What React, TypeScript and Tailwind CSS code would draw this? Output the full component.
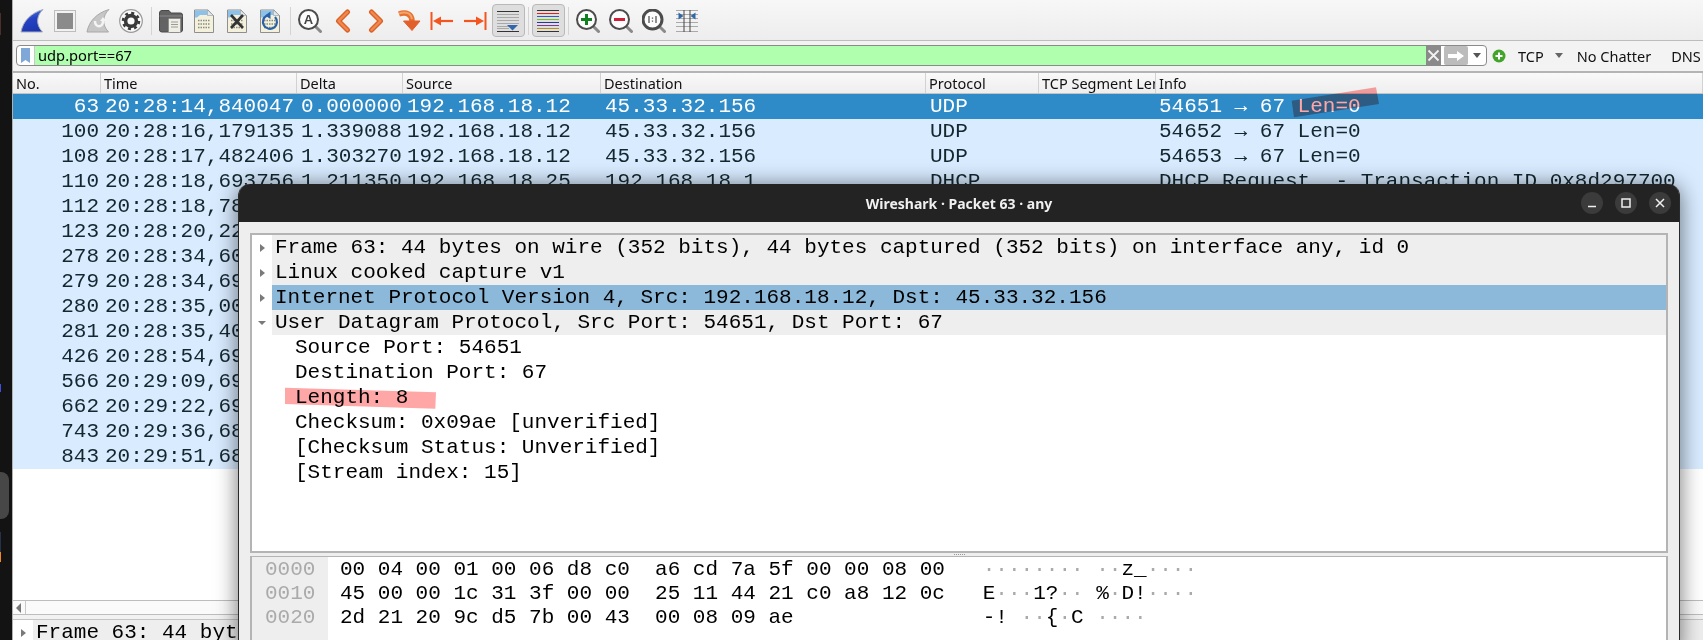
import React from "react";

const mono = "font-['Liberation_Mono',monospace] text-[21px] leading-[25px] whitespace-pre";
const ui = "font-['Noto_Sans',sans-serif]";

const Slot = ({ children, active }: { children: React.ReactNode; active?: boolean }) => (
  <div
    className={
      "w-[33px] h-[33px] shrink-0 flex items-center justify-center " +
      (active ? "bg-[#dedede] border border-[#b9b9b9] rounded-[4px]" : "")
    }
  >
    {children}
  </div>
);
const Sep = () => (
  <div className="w-[7px] h-[28px] shrink-0 flex justify-center">
    <div className="w-px h-full bg-[#d4d4d4]" />
  </div>
);
const Ic = ({ children }: { children: React.ReactNode }) => (
  <svg width="24" height="24" viewBox="0 0 24 24" fill="none">
    {children}
  </svg>
);

const finPath = "M1 23 C3 12 11 4 23 0.500 C17 6 15 15 22.500 23 Z";
const Fin = () => (
  <Ic>
    <defs>
      <linearGradient id="finFill" x1="0.200" y1="0" x2="0.500" y2="1">
        <stop offset="0" stopColor="#5a80e6" />
        <stop offset="0.450" stopColor="#2442c4" />
        <stop offset="1" stopColor="#1c36ae" />
      </linearGradient>
    </defs>
    <path d={finPath} fill="url(#finFill)" stroke="#aab0ba" strokeWidth="1" />
  </Ic>
);
const Stop = () => (
  <Ic>
    <rect x="1.500" y="1.500" width="21" height="21" fill="#f2f2f2" stroke="#bdbdbd" />
    <rect x="4" y="4" width="16" height="16" fill="#8b8b8b" />
  </Ic>
);
const Restart = () => (
  <Ic>
    <path d={finPath} fill="#c6c6c6" stroke="#a8a8a8" strokeWidth="1" />
    <path d="M9 12 C9 19 17 19 17 12" stroke="#f4f4f4" strokeWidth="2.500" />
    <path d="M14 12 L17 8 L20 12 Z" fill="#f4f4f4" />
  </Ic>
);
const Gear = () => (
  <Ic>
    <circle cx="12" cy="12" r="11.300" fill="#fafafa" stroke="#9a9a9a" strokeWidth="1.200" />
    <circle cx="12" cy="12" r="8" fill="none" stroke="#3a3a3a" strokeWidth="2.500" strokeDasharray="3 3.280" />
    <circle cx="12" cy="12" r="5.400" fill="none" stroke="#3a3a3a" strokeWidth="3.600" />
  </Ic>
);
const Folder = () => (
  <Ic>
    <path d="M0.500 4 Q0.500 1.500 3 1.500 L10 1.500 L12 4 L21.500 4 Q23.500 4 23.500 6 L23.500 21 Q23.500 23 21.500 23 L3 23 Q0.500 23 0.500 21 Z" fill="#636363" stroke="#4a4a4a" />
    <path d="M0.500 7 L23.500 7" stroke="#8a8a8a" />
    <rect x="9.500" y="9.500" width="12" height="14" rx="1" fill="#efeee4" stroke="#8d8d8d" />
    <path d="M12 13 H19 M12 15.500 H19 M12 18 H19" stroke="#9a9a9a" />
  </Ic>
);
const FileBase = () => (
  <>
    <path d="M2.500 1 L16 1 L21.500 6.500 L21.500 23.500 L2.500 23.500 Z" fill="#f3f0dc" stroke="#8f8f8f" />
    <path d="M3 1.500 L15.500 1.500 L15.500 6 L8 6 L5 8.500 L3 8.500 Z" fill="#8cc2ea" />
    <path d="M15.500 1 L15.500 6.500 L21.500 6.500 Z" fill="#dfe8ee" stroke="#9a9a9a" strokeWidth="0.600" />
    <path d="M6 11.500 H18 M6 15 H18 M6 18.500 H18" stroke="#8a8a80" strokeWidth="1.600" strokeDasharray="1.500 1" />
  </>
);
const FileIc = () => (
  <Ic>
    <FileBase />
  </Ic>
);
const FileX = () => (
  <Ic>
    <FileBase />
    <path d="M6 6 L18 19 M18 6 L6 19" stroke="#333" strokeWidth="2.600" />
  </Ic>
);
const FileR = () => (
  <Ic>
    <FileBase />
    <path d="M9 6.500 A7 7 0 1 0 17 8" stroke="#2a62a8" strokeWidth="2.200" />
    <path d="M12.500 2.500 L12.500 10 L7 6.500 Z" fill="#2a62a8" />
  </Ic>
);
const Lens = ({ children, w = 2 }: { children?: React.ReactNode; w?: number }) => (
  <Ic>
    <path d="M17 17 L22.500 22.500" stroke="#8a8a8a" strokeWidth="3" strokeLinecap="round" />
    <circle cx="10.500" cy="10.500" r="9.500" fill="#fdfdfd" stroke="#4c4c4c" strokeWidth={w} />
    {children}
  </Ic>
);
const ChevL = () => (
  <Ic>
    <path d="M16.500 3 L7.500 12 L16.500 21" stroke="#dd5f26" strokeWidth="5" strokeLinejoin="round" strokeLinecap="round" />
    <path d="M16.500 3 L7.500 12 L16.500 21" stroke="#ef8a4e" strokeWidth="2.400" strokeLinejoin="round" strokeLinecap="round" />
  </Ic>
);
const ChevR = () => (
  <Ic>
    <path d="M7.500 3 L16.500 12 L7.500 21" stroke="#dd5f26" strokeWidth="5" strokeLinejoin="round" strokeLinecap="round" />
    <path d="M7.500 3 L16.500 12 L7.500 21" stroke="#ef8a4e" strokeWidth="2.400" strokeLinejoin="round" strokeLinecap="round" />
  </Ic>
);
const Jump = () => (
  <Ic>
    <path d="M2 5 C9 2.500 15 5 15 12" stroke="#e8702e" strokeWidth="5.500" />
    <path d="M2 4.500 C9 2 14 4 15 10" stroke="#f2a36e" strokeWidth="2" />
    <path d="M6.500 12 L23 12 L15 21.500 Z" fill="#e2602a" stroke="#e2602a" strokeLinejoin="round" />
  </Ic>
);
const First = () => (
  <Ic>
    <path d="M1.500 3 V21" stroke="#f4551f" strokeWidth="2" />
    <path d="M8 12 H23" stroke="#f4551f" strokeWidth="2.200" />
    <path d="M3 12 L11 7.500 L11 16.500 Z" fill="#f4551f" />
  </Ic>
);
const Last = () => (
  <Ic>
    <path d="M22.500 3 V21" stroke="#f4551f" strokeWidth="2" />
    <path d="M1 12 H16" stroke="#f4551f" strokeWidth="2.200" />
    <path d="M21 12 L13 7.500 L13 16.500 Z" fill="#f4551f" />
  </Ic>
);
const Auto = () => (
  <Ic>
    <path d="M1 2.500 H23 M1 22.500 H23" stroke="#333" />
    <path d="M1 5.500 H23 M1 8.500 H23 M1 11.500 H23 M1 14.500 H23 M1 17.500 H15 M1 19.500 H13" stroke="#a8a8a8" />
    <path d="M11 16 L22 16 L16.500 21.500 Z" fill="#2f66ac" />
  </Ic>
);
const Colorize = () => (
  <Ic>
    <path d="M1 1.500 H23" stroke="#333" />
    <path d="M1 4.500 H23" stroke="#e02020" />
    <path d="M1 7.500 H23" stroke="#3858c0" />
    <path d="M1 10.500 H23" stroke="#70c020" />
    <path d="M1 13.500 H23" stroke="#283898" />
    <path d="M1 16.500 H23" stroke="#803890" />
    <path d="M1 19.500 H23" stroke="#b89020" />
    <path d="M1 22.500 H23" stroke="#333" />
  </Ic>
);
const ResizeC = () => (
  <Ic>
    <path d="M1 1.500 H23 M1 22.500 H23 M1 5.500 H23 M1 9.500 H23 M1 13.500 H23 M1 17.500 H23" stroke="#a9a9a9" />
    <path d="M9 1 V23 M15 1 V23" stroke="#444" />
    <path d="M3.500 3.500 L8.500 7 L3.500 10.500 Z M20.500 3.500 L15.500 7 L20.500 10.500 Z" fill="#2f66ac" />
  </Ic>
);

const heads = ["No.", "Time", "Delta", "Source", "Destination", "Protocol", "TCP Segment Len", "Info"];
const colW = ["w-[88px]", "w-[196px]", "w-[106px]", "w-[198px]", "w-[325px]", "w-[113px]", "w-[117px]", "w-[547px]"];

type R = { n: string; t: string; d?: string; s?: string; ds?: string; p?: string; i?: string; sel?: boolean };
const rows: R[] = [
  { n: "63", t: "20:28:14,840047", d: "0.000000", s: "192.168.18.12", ds: "45.33.32.156", p: "UDP", i: "54651 → 67 Len=0", sel: true },
  { n: "100", t: "20:28:16,179135", d: "1.339088", s: "192.168.18.12", ds: "45.33.32.156", p: "UDP", i: "54652 → 67 Len=0" },
  { n: "108", t: "20:28:17,482406", d: "1.303270", s: "192.168.18.12", ds: "45.33.32.156", p: "UDP", i: "54653 → 67 Len=0" },
  { n: "110", t: "20:28:18,693756", d: "1.211350", s: "192.168.18.25", ds: "192.168.18.1", p: "DHCP", i: "DHCP Request  - Transaction ID 0x8d297700" },
  { n: "112", t: "20:28:18,78" },
  { n: "123", t: "20:28:20,22" },
  { n: "278", t: "20:28:34,60" },
  { n: "279", t: "20:28:34,69" },
  { n: "280", t: "20:28:35,00" },
  { n: "281", t: "20:28:35,40" },
  { n: "426", t: "20:28:54,69" },
  { n: "566", t: "20:29:09,69" },
  { n: "662", t: "20:29:22,69" },
  { n: "743", t: "20:29:36,68" },
  { n: "843", t: "20:29:51,68" },
];

const TriR = () => (
  <svg width="8" height="10" viewBox="0 0 8 10" className="shrink-0">
    <path d="M2 1 L7 5 L2 9 Z" fill="#7a7a7a" />
  </svg>
);
const TriD = () => (
  <svg width="10" height="8" viewBox="0 0 10 8" className="shrink-0">
    <path d="M1 2 L9 2 L5 6 Z" fill="#7a7a7a" />
  </svg>
);

const Tree = ({ text, open, sel }: { text: string; open?: boolean; sel?: boolean }) => (
  <div className="h-[25px] flex">
    <div className="w-[20px] shrink-0 bg-white flex items-center justify-center">{open ? <TriD /> : <TriR />}</div>
    <div className={mono + " flex-1 pl-[3px] text-black " + (sel ? "bg-[#8cb9d9]" : "bg-[#eeeeee]")}>{text}</div>
  </div>
);
const Child = ({ text }: { text: string }) => (
  <div className={mono + " h-[25px] pl-[43px] text-black"}>{text}</div>
);
const Dots = ({ s }: { s: string }) => (
  <>
    {s.split("").map((c, i) =>
      c === "·" ? (
        <span key={i} className="text-[#aaaaaa]">
          ·
        </span>
      ) : (
        <span key={i}>{c}</span>
      )
    )}
  </>
);
const hex = [
  ["0000", "00 04 00 01 00 06 d8 c0  a6 cd 7a 5f 00 00 08 00", "········ ··z_····"],
  ["0010", "45 00 00 1c 31 3f 00 00  25 11 44 21 c0 a8 12 0c", "E···1?·· %·D!····"],
  ["0020", "2d 21 20 9c d5 7b 00 43  00 08 09 ae", "-! ··{·C ····"],
];

export default function App() {
  return (
    <div className="relative w-[1703px] h-[640px] overflow-hidden flex bg-white">
      <div className="w-[13px] shrink-0 bg-[#131313] border-r border-[#b0b0b0] flex flex-col">
        <div className="mt-[13px] w-[1px] h-[22px] bg-[#4a2f2a]" />
        <div className="mt-[349px] w-[1px] h-[8px] bg-[#3f4fe0]" />
        <div className="mt-[80px] w-[9px] h-[47px] bg-[#474747] rounded-r-[8px]" />
        <div className="mt-[13px] w-[1px] h-[20px] bg-[#27324a]" />
        <div className="w-[1px] h-[10px] bg-[#f08a20]" />
      </div>

      <div className="flex-1 min-w-0 flex flex-col">
        {/* toolbar */}
        <div className="h-[41px] shrink-0 flex items-center pl-[2.500px] pt-[1px] bg-gradient-to-b from-[#f7f7f7] to-[#ededed] border-b border-[#bdbdbd]">
          <Slot><Fin /></Slot>
          <Slot><Stop /></Slot>
          <Slot><Restart /></Slot>
          <Slot><Gear /></Slot>
          <Sep />
          <Slot><Folder /></Slot>
          <Slot><FileIc /></Slot>
          <Slot><FileX /></Slot>
          <Slot><FileR /></Slot>
          <Sep />
          <Slot>
            <Lens>
              <text x="10.500" y="15" textAnchor="middle" fontFamily="Liberation Sans, sans-serif" fontWeight="700" fontSize="13" fill="#444">A</text>
            </Lens>
          </Slot>
          <Slot><ChevL /></Slot>
          <Slot><ChevR /></Slot>
          <Slot><Jump /></Slot>
          <Slot><First /></Slot>
          <Slot><Last /></Slot>
          <Slot active><Auto /></Slot>
          <Sep />
          <Slot active><Colorize /></Slot>
          <Sep />
          <Slot>
            <Lens>
              <path d="M10.500 5 V16 M5 10.500 H16" stroke="#118020" strokeWidth="3" />
            </Lens>
          </Slot>
          <Slot>
            <Lens>
              <path d="M5 10.500 H16" stroke="#d02038" strokeWidth="3" />
            </Lens>
          </Slot>
          <Slot>
            <Lens w={3}>
              <path d="M7 7 V14 M14 7 V14 M10.500 8.500 V9.800 M10.500 11.500 V12.800" stroke="#555" strokeWidth="1.300" />
            </Lens>
          </Slot>
          <Slot><ResizeC /></Slot>
        </div>

        {/* filter bar */}
        <div className="h-[32px] shrink-0 flex items-center pl-[3px] pb-[1px] bg-[#f3f3f3] border-b-2 border-[#b4b4b4]">
          <div className="w-[1471px] h-[21px] shrink-0 flex bg-white border border-[#8a8a8a] rounded-[4px] overflow-hidden">
            <div className="w-[18px] shrink-0 flex items-center justify-center border-r border-[#c8c8c8]">
              <svg width="9" height="15" viewBox="0 0 9 15">
                <path d="M0 0 H9 V15 L4.500 12 L0 15 Z" fill="#7fa8d8" />
              </svg>
            </div>
            <div className={ui + " flex-1 bg-[#afffaf] pl-[3px] text-[14.700px] leading-[19px] text-black"}>udp.port==67</div>
            <div className="w-[15px] shrink-0 bg-[#8a8a8a] flex items-center justify-center mr-[3px]">
              <svg width="13" height="13" viewBox="0 0 13 13">
                <path d="M1.500 1.500 L11.500 11.500 M11.500 1.500 L1.500 11.500" stroke="#f2f2f2" strokeWidth="1.800" />
              </svg>
            </div>
            <div className="w-[24px] shrink-0 bg-[#bcbcbc] rounded-[2px] flex items-center justify-center">
              <svg width="18" height="12" viewBox="0 0 18 12">
                <path d="M1 6 H11" stroke="#fff" strokeWidth="4" />
                <path d="M10 1 L17 6 L10 11 Z" fill="#fff" />
              </svg>
            </div>
            <div className="w-[18px] shrink-0 flex items-center justify-center">
              <svg width="8" height="5" viewBox="0 0 8 5">
                <path d="M0 0 H8 L4 5 Z" fill="#555" />
              </svg>
            </div>
          </div>
          <svg width="14" height="14" viewBox="0 0 14 14" className="ml-[5px] shrink-0">
            <circle cx="7" cy="7" r="6.500" fill="#42a52a" />
            <path d="M7 3.500 V10.500 M3.500 7 H10.500" stroke="#fff" strokeWidth="2" />
          </svg>
          <span className={ui + " ml-[12px] pt-[2px] text-[14.500px] text-[#111] shrink-0"}>TCP</span>
          <svg width="8" height="5" viewBox="0 0 8 5" className="ml-[11px] shrink-0">
            <path d="M0 0 H8 L4 5 Z" fill="#666" />
          </svg>
          <span className={ui + " ml-[14px] pt-[2px] text-[14.500px] text-[#111] shrink-0"}>No Chatter</span>
          <span className={ui + " ml-[20px] pt-[2px] text-[14.500px] text-[#111] shrink-0"}>DNS</span>
        </div>

        {/* header */}
        <div className="h-[21px] shrink-0 flex bg-gradient-to-b from-[#f9f9f9] to-[#eeeeee] border-b border-[#c4c4c4]">
          {heads.map((h, i) => (
            <div
              key={h}
              className={
                colW[i] +
                " shrink-0 overflow-hidden whitespace-nowrap border-r border-[#d2d2d2] pl-[3px] text-[14.500px] leading-[21px] text-[#111] " +
                ui
              }
            >
              {h}
            </div>
          ))}
        </div>

        {/* packet list */}
        <div className="h-[506px] shrink-0 bg-white">
          {rows.map((r) => (
            <div
              key={r.n}
              className={
                mono + " h-[25px] flex " + (r.sel ? "bg-[#2e8bc7] text-white" : "bg-[#d8ebff] text-[#12272e]")
              }
            >
              <div className={colW[0] + " shrink-0 text-right pr-[2px]"}>{r.n}</div>
              <div className={colW[1] + " shrink-0 pl-[4px]"}>{r.t}</div>
              <div className={colW[2] + " shrink-0 pl-[4px] overflow-hidden"}>{r.d}</div>
              <div className={colW[3] + " shrink-0 pl-[4px]"}>{r.s}</div>
              <div className={colW[4] + " shrink-0 pl-[4px]"}>{r.ds}</div>
              <div className={colW[5] + " shrink-0 pl-[4px]"}>{r.p}</div>
              <div className={colW[6] + " shrink-0"} />
              <div className={colW[7] + " shrink-0 pl-[3px]"}>{r.i}</div>
            </div>
          ))}
        </div>

        {/* scrollbar */}
        <div className="h-[15px] shrink-0 flex bg-[#fafafa] border-y border-[#bdbdbd]">
          <div className="w-[13px] border-r border-[#c8c8c8] flex items-center justify-center">
            <svg width="6" height="10" viewBox="0 0 6 10">
              <path d="M5 0 V10 L0 5 Z" fill="#777" />
            </svg>
          </div>
        </div>
        <div className="h-[5px] shrink-0 bg-[#f2f2f2] border-b border-[#c4c4c4]" />
        <div className="flex">
          <div className="w-[20px] h-[25px] shrink-0 bg-white flex items-center justify-center">
            <TriR />
          </div>
          <div className="flex-1 pl-[3px] bg-[#eeeeee]">
            <div className={mono + " w-[202px] overflow-hidden text-black"}>Frame 63: 44 bytes</div>
          </div>
        </div>
      </div>

      {/* packet window */}
      <div className="absolute left-[238px] top-[184px] w-[1442px] h-[470px] flex flex-col bg-[#eeeeee] rounded-t-[12px] border-x border-[#2a2a2a] shadow-[0_2px_22px_rgba(0,0,0,0.55)]">
        <div className="h-[38px] shrink-0 relative flex items-center justify-center bg-[#232323] rounded-t-[11px]">
          <span className={ui + " text-[14px] font-bold text-[#f0f0f0]"}>Wireshark · Packet 63 · any</span>
          <div className="absolute right-[8px] top-[8px] flex gap-[12px]">
            <div className="w-[22px] h-[22px] rounded-full bg-[#3b3b3b] flex items-center justify-center">
              <svg width="10" height="10" viewBox="0 0 10 10">
                <path d="M1 8.500 H9" stroke="#f0f0f0" strokeWidth="1.500" />
              </svg>
            </div>
            <div className="w-[22px] h-[22px] rounded-full bg-[#3b3b3b] flex items-center justify-center">
              <svg width="10" height="10" viewBox="0 0 10 10">
                <rect x="1" y="1" width="8" height="8" fill="none" stroke="#f0f0f0" strokeWidth="1.500" />
              </svg>
            </div>
            <div className="w-[22px] h-[22px] rounded-full bg-[#3b3b3b] flex items-center justify-center">
              <svg width="10" height="10" viewBox="0 0 10 10">
                <path d="M1 1 L9 9 M9 1 L1 9" stroke="#f0f0f0" strokeWidth="1.500" />
              </svg>
            </div>
          </div>
        </div>
        <div className="flex-1 pt-[11px] pl-[11px] pr-[11px] flex flex-col min-h-0">
          <div className="h-[320px] shrink-0 bg-white border-2 border-[#b4b4b4]">
            <Tree text="Frame 63: 44 bytes on wire (352 bits), 44 bytes captured (352 bits) on interface any, id 0" />
            <Tree text="Linux cooked capture v1" />
            <Tree text="Internet Protocol Version 4, Src: 192.168.18.12, Dst: 45.33.32.156" sel />
            <Tree text="User Datagram Protocol, Src Port: 54651, Dst Port: 67" open />
            <Child text="Source Port: 54651" />
            <Child text="Destination Port: 67" />
            <Child text="Length: 8" />
            <Child text="Checksum: 0x09ae [unverified]" />
            <Child text="[Checksum Status: Unverified]" />
            <Child text="[Stream index: 15]" />
          </div>
          <div className="h-[3px] shrink-0 flex items-center justify-center gap-[1px]">
            {[0, 1, 2, 3, 4, 5].map((i) => (
              <div key={i} className="w-px h-px bg-[#999999]" />
            ))}
          </div>
          <div className="flex-1 bg-white border-x-2 border-t border-[#b4b4b4] flex min-h-0">
            <div className="w-[76px] shrink-0 bg-[#eeeeee] pt-[0px]">
              {hex.map((h) => (
                <div key={h[0]} className={mono + " h-[24px] leading-[24px] pl-[13px] text-[#aaaaaa]"}>
                  {h[0]}
                </div>
              ))}
            </div>
            <div className="flex-1 pl-[12px]">
              {hex.map((h) => (
                <div key={h[0]} className={mono + " h-[24px] leading-[24px] text-black"}>
                  {h[1].padEnd(48, " ")}
                  {"   "}
                  <Dots s={h[2]} />
                </div>
              ))}
            </div>
          </div>
        </div>
      </div>

      {/* hand-drawn highlighter strokes */}
      <svg className="absolute left-0 top-0 mix-blend-multiply pointer-events-none" width="1703" height="640" viewBox="0 0 1703 640">
        <polygon points="1291.700,100.700 1376,87.300 1379,104 1294,117.300" fill="#ffa6a6" />
        <polygon points="285,387.700 436,392.300 435.300,408.700 285,404" fill="#ffa6a6" />
      </svg>
    </div>
  );
}
